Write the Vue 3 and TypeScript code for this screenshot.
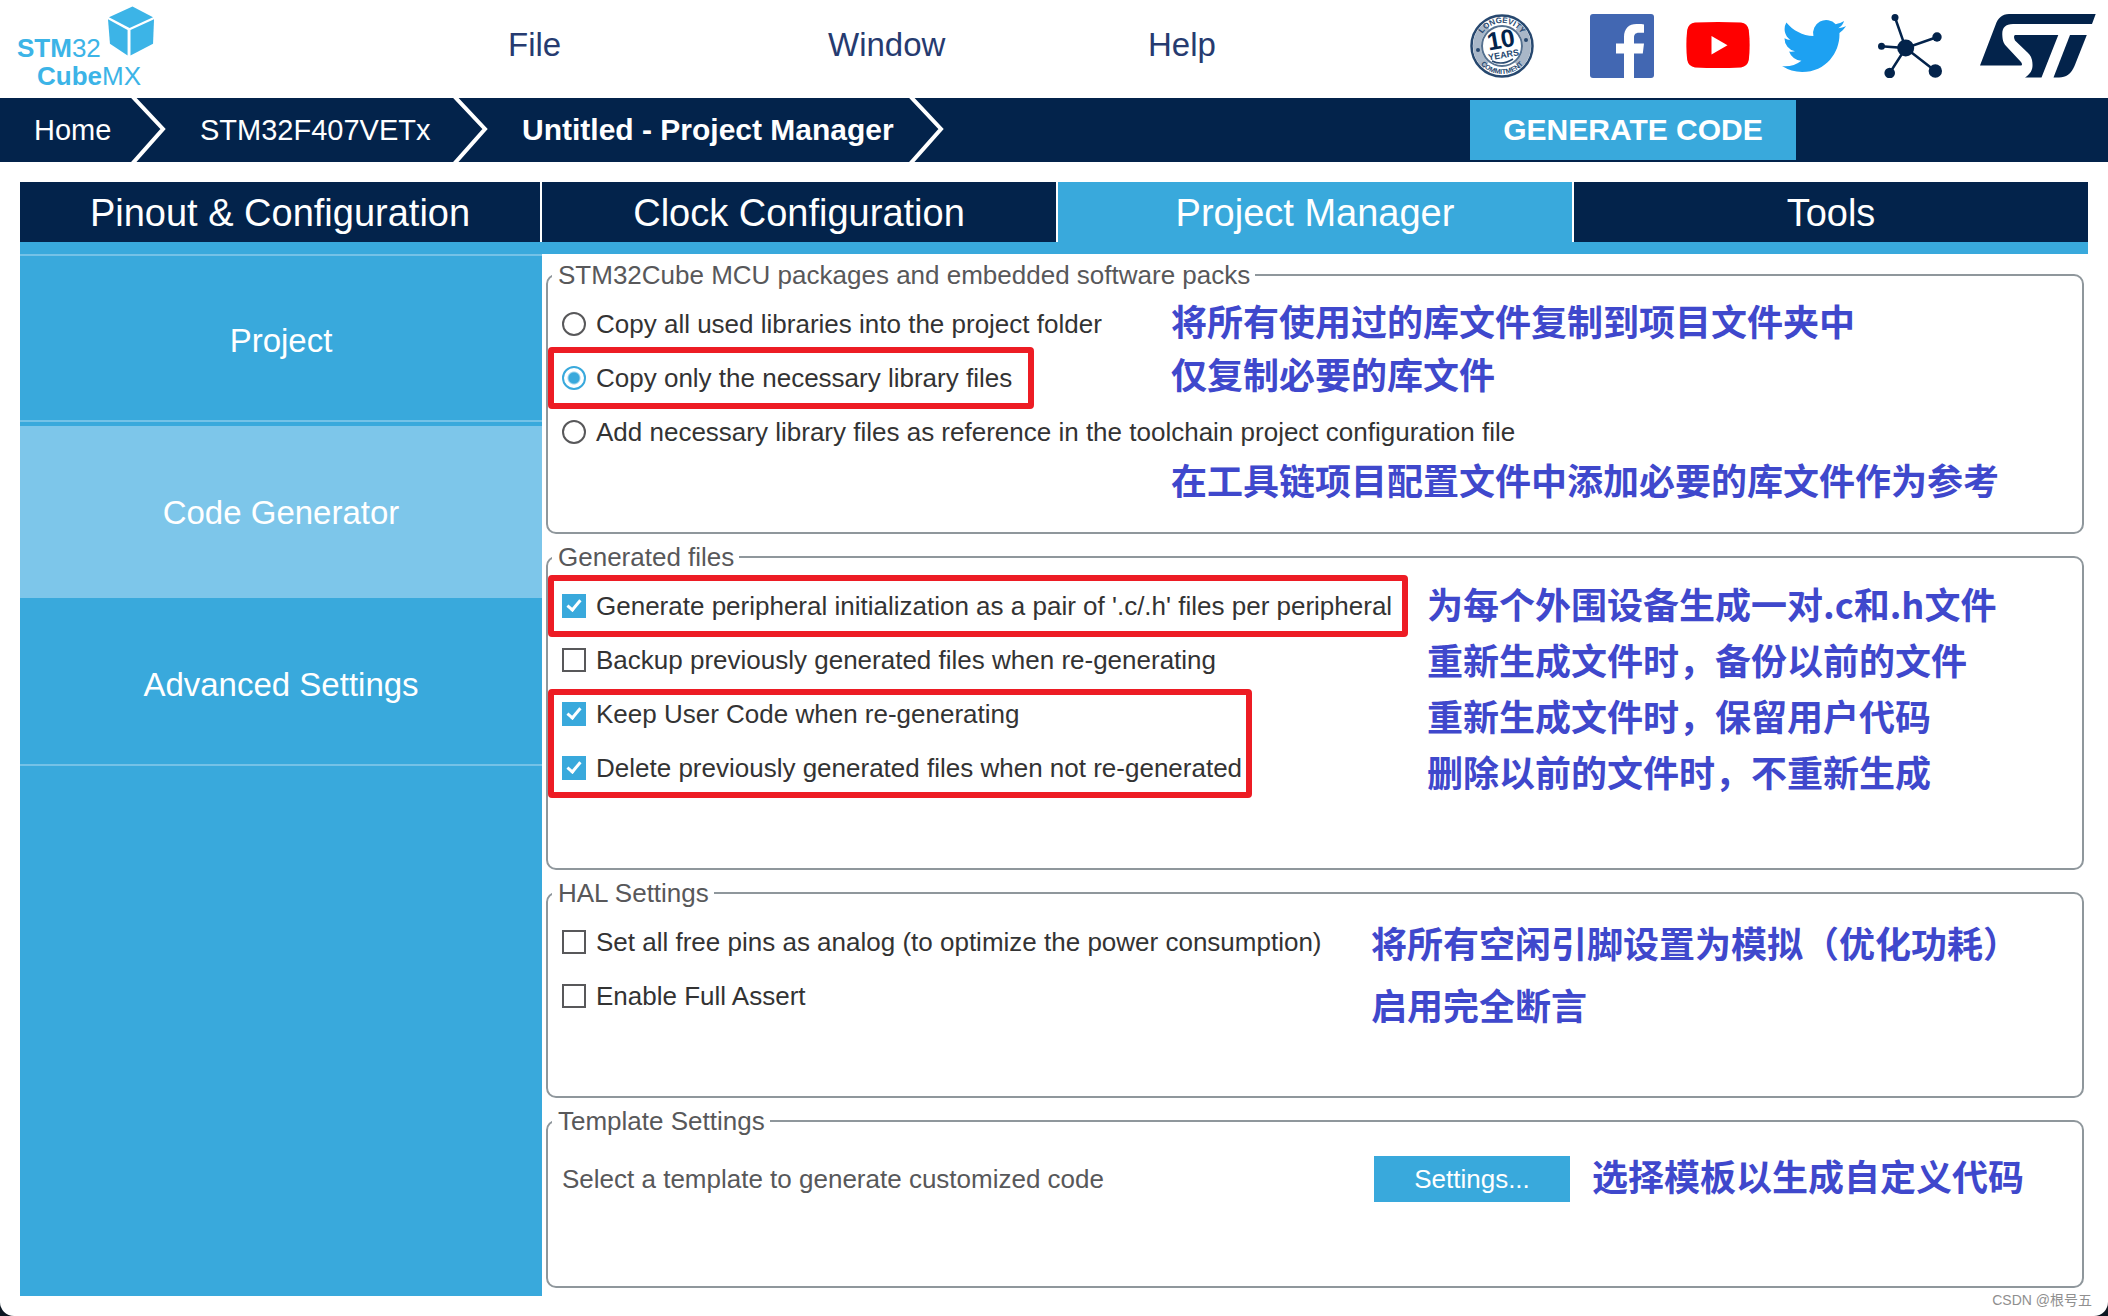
<script setup lang="ts">
import { ref } from 'vue'

interface Option {
  id: string
  label: string
}
interface Block {
  mark?: 'single' | 'pair'
  options: Option[]
}

const menus = ['File', 'Window', 'Help']
const crumbs = ['Home', 'STM32F407VETx', 'Untitled - Project Manager']
const tabs = ['Pinout & Configuration', 'Clock Configuration', 'Project Manager', 'Tools']
const sections = ['Project', 'Code Generator', 'Advanced Settings']
const activeTab = ref('Project Manager')
const activeSection = ref('Code Generator')

const copyMode = ref('necessary')
const copyBlocks: Block[] = [
  { options: [{ id: 'all', label: 'Copy all used libraries into the project folder' }] },
  { mark: 'single', options: [{ id: 'necessary', label: 'Copy only the necessary library files' }] },
  {
    options: [
      {
        id: 'reference',
        label: 'Add necessary library files as reference in the toolchain project configuration file',
      },
    ],
  },
]
const copyNotes = [
  '将所有使用过的库文件复制到项目文件夹中',
  '仅复制必要的库文件',
  '在工具链项目配置文件中添加必要的库文件作为参考',
]

const fileFlags = ref<string[]>(['pair', 'keep', 'delete'])
const fileBlocks: Block[] = [
  {
    mark: 'single',
    options: [
      { id: 'pair', label: "Generate peripheral initialization as a pair of '.c/.h' files per peripheral" },
    ],
  },
  { options: [{ id: 'backup', label: 'Backup previously generated files when re-generating' }] },
  {
    mark: 'pair',
    options: [
      { id: 'keep', label: 'Keep User Code when re-generating' },
      { id: 'delete', label: 'Delete previously generated files when not re-generated' },
    ],
  },
]
const fileNotes = [
  '为每个外围设备生成一对.c和.h文件',
  '重新生成文件时，备份以前的文件',
  '重新生成文件时，保留用户代码',
  '删除以前的文件时，不重新生成',
]

const halFlags = ref<string[]>([])
const halOptions: Option[] = [
  { id: 'analog', label: 'Set all free pins as analog (to optimize the power consumption)' },
  { id: 'assert', label: 'Enable Full Assert' },
]
const halNotes = ['将所有空闲引脚设置为模拟（优化功耗）', '启用完全断言']
</script>

<template>
  <div class="app">
    <header class="top">
      <div class="brand">
        <div class="brand-stm"><b>STM</b>32</div>
        <div class="brand-cube"><b>Cube</b>MX</div>
        <svg class="brand-box" viewBox="0 0 48 50" aria-hidden="true">
          <path d="M1 11 L25 0 L46 11 L22 22Z" />
          <path d="M0 13 L20 24 V50 L2 38Z" />
          <path d="M47 13 L23 24 V50 L46 38Z" />
        </svg>
      </div>
      <nav class="menus">
        <button v-for="m in menus" :key="m" type="button" class="menu">{{ m }}</button>
      </nav>
      <div class="links">
        <a href="#" class="link badge" aria-label="10 years longevity commitment">
          <svg viewBox="0 0 64 64">
            <defs>
              <path id="arcTop" d="M9 32 A23 23 0 0 1 55 32" />
              <path id="arcBottom" d="M4 32 A28 28 0 0 0 60 32" />
            </defs>
            <circle cx="32" cy="32" r="30.5" fill="#fff" stroke="#27486f" stroke-width="2.5" />
            <circle cx="32" cy="32" r="25" fill="none" stroke="#a9b7c8" stroke-width="8" stroke-dasharray="45 33.5" stroke-dashoffset="-56" />
            <circle cx="32" cy="32" r="20" fill="#fff" stroke="#54708f" stroke-width="2" />
            <g fill="#27486f" font-family="Liberation Sans, sans-serif" font-weight="700" text-anchor="middle">
              <text font-size="8"><textPath href="#arcTop" startOffset="50%">LONGEVITY</textPath></text>
              <text font-size="7"><textPath href="#arcBottom" startOffset="50%">COMMITMENT</textPath></text>
              <g transform="rotate(-10 32 32)">
                <text x="32" y="34" font-size="25" fill="#03234b">10</text>
                <text x="32" y="44" font-size="9">YEARS</text>
              </g>
            </g>
            <path d="M22 47 Q32 52 43 45" fill="none" stroke="#27486f" stroke-width="1.5" />
            <circle cx="8" cy="36" r="2" fill="#27486f" />
            <circle cx="56" cy="26" r="2" fill="#27486f" />
          </svg>
        </a>
        <a href="#" class="link" aria-label="Facebook">
          <svg viewBox="0 0 64 64">
            <rect width="64" height="64" rx="3" fill="#4267b2" />
            <path fill="#fff" d="M34 64V39.5H26V29.5H34V23C34 14.5 39 10 46.5 10C50 10 53 10.2 54 10.4V18.8H49C45 18.8 44 21 44 24V29.5H54L52.8 39.5H44V64Z" />
          </svg>
        </a>
        <a href="#" class="link" aria-label="YouTube">
          <svg viewBox="0 0 64 64">
            <path fill="#f00" d="M9 8.6Q32 7.4 55 8.6Q61.500 9.500 62.800 16Q64.500 31 62.800 46Q61.500 52.500 55 53.400Q32 54.600 9 53.400Q2.500 52.500 1.200 46Q-.5 31 1.200 16Q2.500 9.500 9 8.600Z" />
            <path fill="#fff" d="M25.500 22V40.500L41.500 31.200Z" />
          </svg>
        </a>
        <a href="#" class="link" aria-label="Twitter">
          <svg viewBox="0 0 24 24">
            <path fill="#1da1f2" d="M23.953 4.57a10 10 0 01-2.825.775 4.958 4.958 0 002.163-2.723c-.951.555-2.005.959-3.127 1.184a4.92 4.92 0 00-8.384 4.482C7.69 8.095 4.067 6.13 1.64 3.162a4.822 4.822 0 00-.666 2.475c0 1.71.87 3.213 2.188 4.096a4.904 4.904 0 01-2.228-.616v.06a4.923 4.923 0 003.946 4.827 4.996 4.996 0 01-2.212.085 4.936 4.936 0 004.604 3.417 9.867 9.867 0 01-6.102 2.105c-.39 0-.779-.023-1.17-.067a13.995 13.995 0 007.557 2.209c9.053 0 13.998-7.496 13.998-13.985 0-.21 0-.42-.015-.63A9.935 9.935 0 0024 4.59z" />
          </svg>
        </a>
        <a href="#" class="link" aria-label="Community">
          <svg viewBox="0 0 64 64" fill="#03234b" stroke="#03234b">
            <path d="M17 3.500L27.700 34L3 32.300M59.300 23L27.700 34L11.700 59M27.700 34L57.300 57" fill="none" stroke-width="2.500" />
            <g stroke="none">
              <circle cx="27.700" cy="34" r="8.500" />
              <circle cx="17" cy="3.500" r="3.500" />
              <circle cx="3.500" cy="32.300" r="3.500" />
              <circle cx="59" cy="23" r="4.700" />
              <circle cx="11.700" cy="59" r="5.300" />
              <circle cx="57.300" cy="57" r="6.700" />
            </g>
          </svg>
        </a>
        <a href="#" class="link st" aria-label="STMicroelectronics">
          <svg viewBox="0 0 116 64" fill="#03234b">
            <path d="M0 51.500L15.500 11C18 4 22 0 29 0H115.700L112 10H33C25 10 22 14 22.300 21C22.500 27 24 30 27 33L41 48Q43 51 41 51.500Z" />
            <path d="M35 21H78.300L61.500 63.500H45C52 59 53.500 54 52 46C51 42 50 41 47 38L35 26.500Q33 22 35 21Z" />
            <path d="M90 21H106.800L94.500 52C91 60 86 63.500 79 63.500H73.500Z" />
          </svg>
        </a>
      </div>
    </header>

    <div class="trail">
      <nav class="crumbs">
        <a v-for="c in crumbs" :key="c" href="#" class="crumb">
          <span>{{ c }}</span>
          <svg class="chevron" viewBox="0 0 36 64" aria-hidden="true">
            <path d="M2 -2L33 31L2 66" fill="none" stroke="#fff" stroke-width="4" />
          </svg>
        </a>
      </nav>
      <div class="trail-end">
        <button type="button" class="generate">GENERATE CODE</button>
      </div>
    </div>

    <main class="work">
      <div class="tabs">
        <button
          v-for="t in tabs"
          :key="t"
          type="button"
          class="tab"
          :class="{ active: t === activeTab }"
          @click="activeTab = t"
        >
          {{ t }}
        </button>
      </div>
      <div class="body">
        <nav class="side">
          <button
            v-for="s in sections"
            :key="s"
            type="button"
            class="side-item"
            :class="{ active: s === activeSection }"
            @click="activeSection = s"
          >
            {{ s }}
          </button>
        </nav>

        <div class="panel">
          <fieldset class="group packages">
            <legend>STM32Cube MCU packages and embedded software packs</legend>
            <div class="cols">
              <div class="options">
                <div v-for="(b, i) in copyBlocks" :key="i" class="block" :class="b.mark">
                  <label v-for="o in b.options" :key="o.id" class="option">
                    <input v-model="copyMode" type="radio" name="copy" :value="o.id" />
                    <span>{{ o.label }}</span>
                  </label>
                </div>
              </div>
              <div class="notes">
                <p v-for="n in copyNotes" :key="n">{{ n }}</p>
              </div>
            </div>
          </fieldset>

          <fieldset class="group files">
            <legend>Generated files</legend>
            <div class="cols">
              <div class="options">
                <div v-for="(b, i) in fileBlocks" :key="i" class="block" :class="b.mark">
                  <label v-for="o in b.options" :key="o.id" class="option">
                    <input v-model="fileFlags" type="checkbox" :value="o.id" />
                    <span>{{ o.label }}</span>
                  </label>
                </div>
              </div>
              <div class="notes">
                <p v-for="n in fileNotes" :key="n">{{ n }}</p>
              </div>
            </div>
          </fieldset>

          <fieldset class="group hal">
            <legend>HAL Settings</legend>
            <div class="cols">
              <div class="options">
                <label v-for="o in halOptions" :key="o.id" class="option">
                  <input v-model="halFlags" type="checkbox" :value="o.id" />
                  <span>{{ o.label }}</span>
                </label>
              </div>
              <div class="notes">
                <p v-for="n in halNotes" :key="n">{{ n }}</p>
              </div>
            </div>
          </fieldset>

          <fieldset class="group template">
            <legend>Template Settings</legend>
            <div class="cols">
              <span class="hint">Select a template to generate customized code</span>
              <div class="pick">
                <button type="button" class="settings">Settings...</button>
                <div class="notes"><p>选择模板以生成自定义代码</p></div>
              </div>
            </div>
          </fieldset>
        </div>
      </div>
    </main>
    <div class="watermark">CSDN @根号五</div>
  </div>
</template>

<style>
html {
  background: #0d1722;
}
body {
  margin: 0;
}
</style>

<style scoped>
.app {
  position: relative;
  box-sizing: border-box;
  min-height: 100vh;
  display: flex;
  flex-direction: column;
  background: #fff;
  border-radius: 0 0 14px 14px;
  font-family: 'Liberation Sans', Arial, 'Noto Sans CJK SC', sans-serif;
  font-size: 26px;
  color: #333;
}
button {
  border: 0;
  padding: 0;
  background: none;
  font: inherit;
  color: inherit;
  cursor: pointer;
}
a {
  color: inherit;
  text-decoration: none;
}

.top {
  display: flex;
  align-items: flex-start;
  height: 98px;
}
.brand {
  position: relative;
  box-sizing: border-box;
  width: 508px;
  padding: 34px 0 0 17px;
  font-size: 26px;
  line-height: 28px;
  color: #3cb4e7;
}
.brand-cube {
  padding-left: 20px;
}
.brand-box {
  position: absolute;
  left: 108px;
  top: 6px;
  width: 47px;
  height: 50px;
  fill: #3cb4e7;
}
.menus {
  flex: 1;
  display: flex;
  padding-top: 25px;
}
.menu {
  width: 320px;
  font-size: 33px;
  line-height: 40px;
  text-align: left;
  color: #263b70;
}
.links {
  display: flex;
  gap: 32px;
  padding: 14px 12px 0 0;
}
.link {
  display: block;
  width: 64px;
  height: 64px;
}
.link svg {
  display: block;
  width: 100%;
  height: 100%;
}
.link.badge {
  margin-right: 24px;
}
.link.st {
  width: 116px;
  margin-left: 6px;
}

.trail {
  display: flex;
  justify-content: space-between;
  height: 64px;
  background: #03234b;
  color: #fff;
}
.crumbs {
  display: flex;
}
.crumb {
  box-sizing: border-box;
  display: flex;
  align-items: center;
  justify-content: space-between;
  min-width: 166px;
  padding-left: 34px;
  font-size: 29px;
  white-space: nowrap;
}
.crumb:nth-child(2) {
  min-width: 322px;
}
.crumb:nth-child(3) {
  min-width: 456px;
  font-size: 30px;
  font-weight: 700;
}
.chevron {
  width: 36px;
  height: 64px;
}
.trail-end {
  box-sizing: border-box;
  width: 638px;
  padding: 2px 0;
}
.generate {
  width: 326px;
  height: 60px;
  background: #39a9dc;
  font-size: 30px;
  font-weight: 700;
}

.work {
  flex: 1;
  display: flex;
  flex-direction: column;
  padding: 20px;
}
.tabs {
  display: grid;
  grid-template-columns: 520px repeat(3, 1fr);
  gap: 2px;
  border-bottom: 12px solid #39a9dc;
}
.tab {
  height: 60px;
  padding-top: 2px;
  background: #03234b;
  font-size: 38px;
  color: #fff;
}
.tab.active {
  background: #39a9dc;
}
.body {
  flex: 1;
  display: flex;
}
.side {
  flex: none;
  width: 522px;
  display: flex;
  flex-direction: column;
  background: #39a9dc;
}
.side-item {
  height: 172px;
  padding-top: 2px;
  background: linear-gradient(#74c2e7, #74c2e7) 0 166px / 100% 2px no-repeat;
  font-size: 33px;
  color: #fff;
}
.side-item:first-child {
  background:
    linear-gradient(#74c2e7, #74c2e7) 0 0 / 100% 2px no-repeat,
    linear-gradient(#74c2e7, #74c2e7) 0 166px / 100% 2px no-repeat;
}
.side-item.active {
  background: #7dc6ea;
}

.panel {
  flex: 1;
  min-width: 0;
  display: flex;
  flex-direction: column;
  gap: 5px;
  padding: 3px 4px 8px;
}
.group {
  box-sizing: border-box;
  min-width: 0;
  margin: 0;
  padding: 4px 14px 0;
  border: 2px solid #8f979c;
  border-radius: 10px;
}
.packages {
  min-height: 277px;
}
.files {
  min-height: 331px;
}
.hal {
  min-height: 223px;
}
.template {
  min-height: 185px;
}
legend {
  margin-left: -10px;
  padding: 0 5px 0 6px;
  line-height: 36px;
  color: #58585a;
}
.cols {
  display: grid;
  align-items: start;
  white-space: nowrap;
}
.packages .cols {
  grid-template-columns: 609px 1fr;
}
.files .cols {
  grid-template-columns: 865px 1fr;
}
.hal .cols {
  grid-template-columns: 809px 1fr;
}
.template .cols {
  grid-template-columns: 812px 1fr;
  align-items: center;
  height: 72px;
}
.block {
  position: relative;
  width: fit-content;
}
.option {
  display: flex;
  align-items: center;
  gap: 10px;
  width: fit-content;
  height: 54px;
}
.block.single::after,
.block.pair::after {
  content: '';
  position: absolute;
  inset: -4px -16px -4px -14px;
  border: 6px solid #ed1c24;
  border-radius: 4px;
  pointer-events: none;
}
.packages .block.single::after {
  right: -22px;
}
.block.pair::after {
  inset: 2px -10px -3px -14px;
}
input {
  appearance: none;
  position: relative;
  box-sizing: border-box;
  flex: none;
  width: 24px;
  height: 24px;
  margin: 0;
  border: 2px solid #58585a;
}
input[type='radio'] {
  border-radius: 50%;
}
input:checked {
  border-color: #39a9dc;
}
input[type='radio']:checked {
  background: radial-gradient(circle, #39a9dc 5px, #fff 7px);
}
input[type='checkbox']:checked {
  background: #39a9dc;
}
input[type='checkbox']:checked::after {
  content: '';
  position: absolute;
  left: 6px;
  top: 1px;
  width: 5px;
  height: 11px;
  border: solid #fff;
  border-width: 0 3px 3px 0;
  transform: rotate(40deg);
}
.notes {
  display: grid;
  grid-auto-rows: 53px;
  align-items: center;
  margin: -4px 0 4px;
  font-family: 'Noto Sans CJK SC', sans-serif;
  font-size: 36px;
  font-weight: 700;
  line-height: 36px;
  color: #3f48cc;
}
.notes p {
  margin: 0;
}
.packages .notes p:last-child {
  grid-row: 4;
}
.files .notes {
  grid-auto-rows: 56px;
}
.hal .notes {
  grid-auto-rows: 62px;
}
.hint {
  color: #58585a;
}
.pick {
  display: flex;
  align-items: center;
  gap: 22px;
}
.settings {
  width: 196px;
  height: 46px;
  background: #39a9dc;
  color: #fff;
}
.watermark {
  position: absolute;
  right: 16px;
  bottom: 6px;
  font-size: 14px;
  line-height: 20px;
  color: #8f8f8f;
}
</style>
